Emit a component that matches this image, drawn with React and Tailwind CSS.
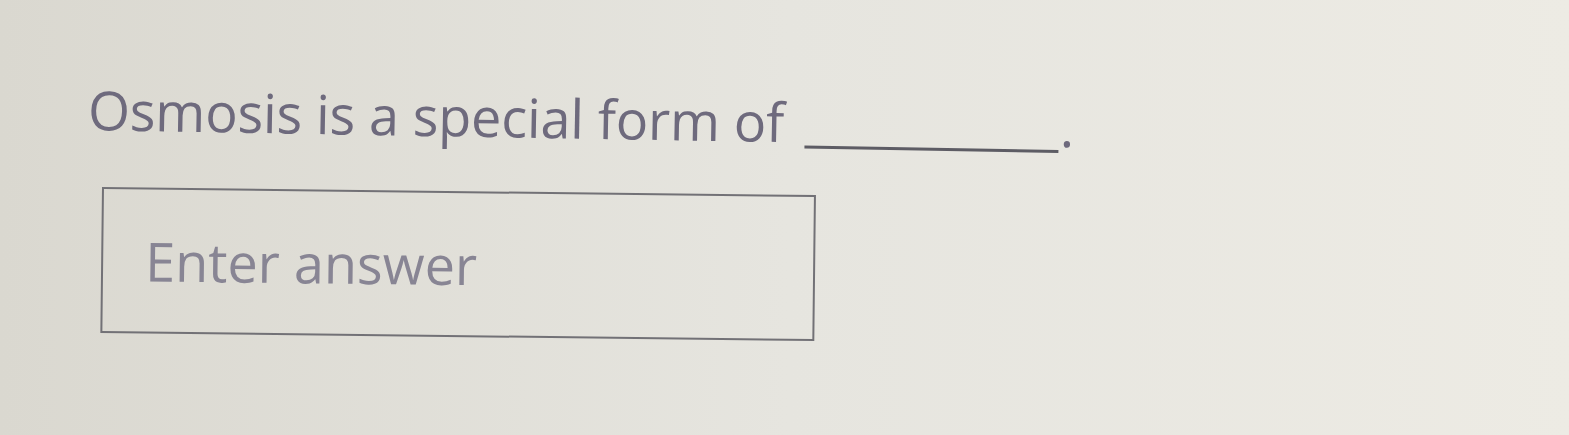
export default function App() {
  return (
    <div
      className="w-[1569px] h-[435px] overflow-hidden bg-gradient-to-r from-[#dad8d0] via-[#e6e5df] to-[#edebe4]"
      style={{ fontFamily: '"Open Sans", sans-serif' }}
    >
      <div className="pl-[88px] pt-[82px]">
        {/* question line, camera tilt applied */}
        <p className="origin-left rotate-[1deg] text-[54px] leading-[54px] tracking-[-0.15px] text-[#6e6a7d] whitespace-nowrap">
          Osmosis is a special form of
          <span className="inline-block ml-[21px] w-[254px] h-0 border-b-[3px] border-[#5d5c64] align-[-6px]" />
          <span className="ml-[1px]">.</span>
        </p>

        <div className="origin-top-left rotate-[0.65deg] mt-[51px] ml-[14px] w-[714px] h-[146px] border-2 border-[#727176] flex items-center pl-[42px]">
          <span className="text-[54px] leading-[54px] text-[#888594]">Enter answer</span>
        </div>
      </div>
    </div>
  );
}
